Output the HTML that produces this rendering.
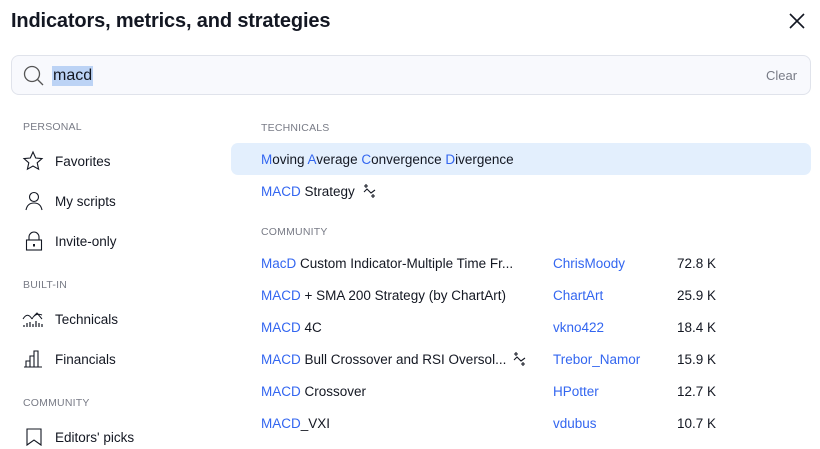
<!DOCTYPE html>
<html><head><style>
body{margin:0;width:820px;height:449px;background:#fff;font-family:"Liberation Sans","DejaVu Sans",sans-serif;color:#131722;position:relative;overflow:hidden}
.a{position:absolute;white-space:nowrap}
.t{font-size:13.5px;line-height:16px;transform:translateY(-7px)}
.l{font-size:10.5px;color:#787b86;letter-spacing:.2px;transform:translateY(-5px)}
.b{color:#3366f0}
svg{position:absolute}
</style></head><body>
<div class="a" style="left:11px;top:10px;font-size:20px;font-weight:bold;letter-spacing:-.15px">Indicators, metrics, and strategies</div>
<svg style="left:787px;top:11px" width="20" height="20" viewBox="0 0 20 20"><path d="M3 3L17 17M17 3L3 17" stroke="#131722" stroke-width="1.6"/></svg>
<div class="a" style="left:11px;top:55px;width:798px;height:38px;border:1px solid #e0e3eb;border-radius:8px;background:#f8f9fd"></div>
<svg style="left:22px;top:64px" width="24" height="24" viewBox="0 0 24 24"><circle cx="10" cy="10" r="7.5" fill="none" stroke="#555" stroke-width="1.3"/><path d="M15.5 15.5L21 21" stroke="#555" stroke-width="1.3"/></svg>
<div class="a" style="left:52px;top:66px;height:20px;background:#bcd3f5;font-size:16px;line-height:20px;padding:0 1px">macd</div>
<div class="a" style="left:766px;top:68px;font-size:13px;color:#787b86">Clear</div>

<div class="a l" style="left:23px;top:126px">PERSONAL</div>
<svg style="left:22px;top:150px" width="22" height="22" viewBox="0 0 22 22"><path d="M11 2l2.7 6 6.3.6-4.8 4.2 1.4 6.4L11 16l-5.6 3.2 1.4-6.4L2 8.6 8.3 8z" fill="none" stroke="#131722" stroke-width="1.1"/></svg>
<div class="a t" style="left:55px;top:161px">Favorites</div>
<svg style="left:23px;top:190px" width="22" height="22" viewBox="0 0 22 22"><circle cx="11" cy="7" r="4.5" fill="none" stroke="#131722" stroke-width="1.1"/><path d="M3 20c1-5 4-7 8-7s7 2 8 7" fill="none" stroke="#131722" stroke-width="1.1"/></svg>
<div class="a t" style="left:55px;top:201px">My scripts</div>
<svg style="left:23px;top:230px" width="22" height="22" viewBox="0 0 22 22"><path d="M6 10V7a5 5 0 0 1 10 0v3" fill="none" stroke="#131722" stroke-width="1.1"/><rect x="3.5" y="10" width="15" height="10" fill="none" stroke="#131722" stroke-width="1.1"/><rect x="10" y="14" width="2" height="2.5" fill="#131722"/></svg>
<div class="a t" style="left:55px;top:241px">Invite-only</div>
<div class="a l" style="left:23px;top:284px">BUILT-IN</div>
<svg style="left:22px;top:308px" width="22" height="22" viewBox="0 0 22 22"><path d="M1 11c3-5 6-5 9 0M10 11c2-4 5-6 10-4M12 8l3-3 5 6" fill="none" stroke="#131722" stroke-width="1"/><path d="M2 19v-2M5 19v-4M8 19v-5M11 19v-3M14 19v-6M17 19v-4M20 19v-3" stroke="#131722" stroke-width="1.2"/></svg>
<div class="a t" style="left:55px;top:319px">Technicals</div>
<svg style="left:22px;top:348px" width="22" height="22" viewBox="0 0 22 22"><path d="M2 19h18M4 19v-6h4v6M8 19V8h4v11M12 19V3h4v16" fill="none" stroke="#131722" stroke-width="1.1"/></svg>
<div class="a t" style="left:55px;top:359px">Financials</div>
<div class="a l" style="left:23px;top:402px">COMMUNITY</div>
<svg style="left:23px;top:426px" width="22" height="22" viewBox="0 0 22 22"><path d="M4 3h14v16l-7-5-7 5z" fill="none" stroke="#131722" stroke-width="1.1"/></svg>
<div class="a t" style="left:55px;top:437px">Editors' picks</div>

<div class="a l" style="left:261px;top:127px">TECHNICALS</div>
<div class="a" style="left:231px;top:143px;width:580px;height:32px;border-radius:7px;background:#e3effd"></div>
<div class="a t" style="left:261px;top:159px"><span class="b">M</span>oving <span class="b">A</span>verage <span class="b">C</span>onvergence <span class="b">D</span>ivergence</div>
<div class="a t" style="left:261px;top:191px"><span class="b">MACD</span> Strategy</div>
<svg style="left:362px;top:181px" width="16" height="20" viewBox="0 0 16 20"><path d="M2 11l3-3 4 4 4-3M4 3v4M2 5h4M11 13v4M9 15h4" fill="none" stroke="#131722" stroke-width="1.1"/></svg>
<div class="a l" style="left:261px;top:231px">COMMUNITY</div>

<div class="a t" style="left:261px;top:263px"><span class="b">MacD</span> Custom Indicator-Multiple Time Fr...</div>
<div class="a t" style="left:261px;top:295px"><span class="b">MACD</span> + SMA 200 Strategy (by ChartArt)</div>
<div class="a t" style="left:261px;top:327px"><span class="b">MACD</span> 4C</div>
<div class="a t" style="left:261px;top:359px"><span class="b">MACD</span> Bull Crossover and RSI Oversol...</div>
<svg style="left:512px;top:349px" width="16" height="20" viewBox="0 0 16 20"><path d="M2 11l3-3 4 4 4-3M4 3v4M2 5h4M11 13v4M9 15h4" fill="none" stroke="#131722" stroke-width="1.1"/></svg>
<div class="a t" style="left:261px;top:391px"><span class="b">MACD</span> Crossover</div>
<div class="a t" style="left:261px;top:423px"><span class="b">MACD</span>_VXI</div>

<div class="a t b" style="left:553px;top:263px">ChrisMoody</div>
<div class="a t b" style="left:553px;top:295px">ChartArt</div>
<div class="a t b" style="left:553px;top:327px">vkno422</div>
<div class="a t b" style="left:553px;top:359px">Trebor_Namor</div>
<div class="a t b" style="left:553px;top:391px">HPotter</div>
<div class="a t b" style="left:553px;top:423px">vdubus</div>

<div class="a t" style="left:677px;top:263px">72.8 K</div>
<div class="a t" style="left:677px;top:295px">25.9 K</div>
<div class="a t" style="left:677px;top:327px">18.4 K</div>
<div class="a t" style="left:677px;top:359px">15.9 K</div>
<div class="a t" style="left:677px;top:391px">12.7 K</div>
<div class="a t" style="left:677px;top:423px">10.7 K</div>
</body></html>
